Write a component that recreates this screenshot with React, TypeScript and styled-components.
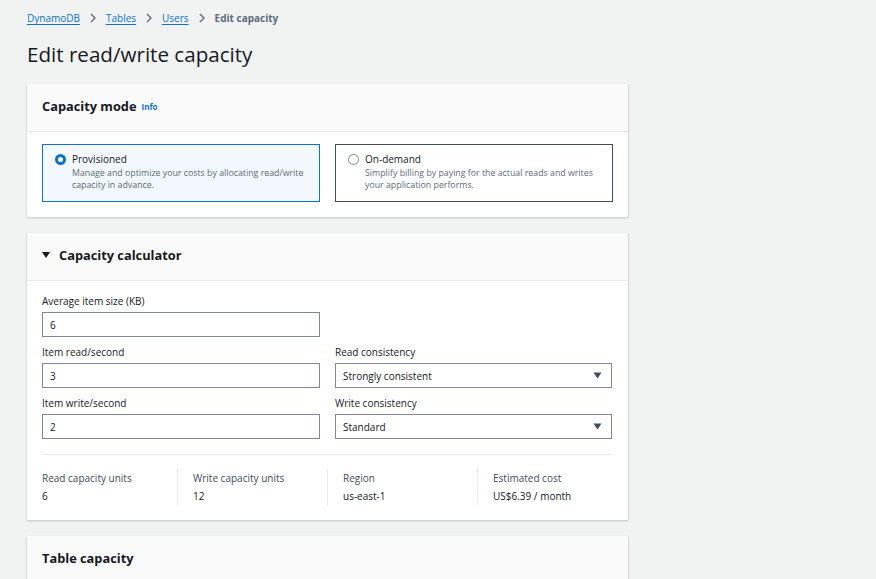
import React from "react";
import styled, { createGlobalStyle } from "styled-components";

const Global = createGlobalStyle`
  html, body { margin: 0; padding: 0; background: #f1f2f2; }
  body { font-family: "Open Sans", "Liberation Sans", sans-serif; color: #16191f; }
  * { box-sizing: border-box; }
`;

const Page = styled.div`
  padding: 9px 0 0 27px;
  width: 628px;
`;

const Crumbs = styled.nav`
  display: flex;
  align-items: center;
  gap: 9px;
  font-size: 10px;
  height: 18px;
`;

const CrumbLink = styled.a`
  color: #0972d3;
  text-decoration: underline;
  text-underline-offset: 2px;
`;

const CrumbCurrent = styled.span`
  color: #5f6b7a;
  font-weight: 700;
`;

const Chevron = () => (
  <svg width="8" height="10" viewBox="0 0 8 10">
    <path d="M2 1l4 4-4 4" fill="none" stroke="#5f6b7a" strokeWidth="1.4" />
  </svg>
);

const Title = styled.h1`
  margin: 14px 0 17px;
  font-size: 20.6px;
  font-weight: 400;
  line-height: 26px;
`;

const Card = styled.section`
  background: #fff;
  box-shadow: 0 1px 2px rgba(0, 7, 22, 0.18), 1px 0 0 rgba(0,0,0,0.06), -1px 0 0 rgba(0,0,0,0.03);
  margin-bottom: 16px;
`;

const CardHeader = styled.header<{ $bordered?: boolean }>`
  background: #fafafa;
  height: 48px;
  padding: 0 15px 4px;
  display: flex;
  align-items: center;
  gap: 8px;
  border-bottom: ${(p) => (p.$bordered ? "1px solid #e9ebed" : "none")};
`;

const CardTitle = styled.h2`
  margin: 0;
  font-size: 12.8px;
  font-weight: 700;
  display: flex;
  align-items: center;
  gap: 5px;
`;

const Info = styled.a`
  color: #0972d3;
  font-size: 8px;
  font-weight: 700;
  margin-top: 2px;
`;

const CardBody = styled.div<{ $top?: number; $bottom?: number }>`
  padding: ${(p) => p.$top ?? 12}px 15px ${(p) => p.$bottom ?? 15}px;
`;

const TileRow = styled.div`
  display: grid;
  grid-template-columns: 1fr 1fr;
  gap: 15px;
`;

const Tile = styled.label<{ $selected?: boolean }>`
  border: 1px solid ${(p) => (p.$selected ? "#0972d3" : "#414d5c")};
  background: ${(p) => (p.$selected ? "#f2f8fd" : "#fff")};
  height: 58px;
  padding: 7px 12px;
  display: flex;
  gap: 6px;
`;

const Radio = styled.span<{ $checked?: boolean }>`
  flex: none;
  width: 11px;
  height: 11px;
  margin-top: 2px;
  border-radius: 50%;
  border: ${(p) => (p.$checked ? "3px solid #0972d3" : "1px solid #7d8998")};
  background: #fff;
`;

const TileText = styled.div`
  display: flex;
  flex-direction: column;
`;

const TileTitle = styled.span`
  font-size: 10px;
  line-height: 15px;
`;

const TileDesc = styled.span`
  font-size: 8.8px;
  line-height: 12px;
  color: #5f6b7a;
`;

const Caret = styled.span`
  display: inline-block;
  width: 0;
  height: 0;
  border-left: 4px solid transparent;
  border-right: 4px solid transparent;
  border-top: 6px solid #16191f;
  margin-right: 4px;
`;

const FormGrid = styled.div`
  display: grid;
  grid-template-columns: 278px 277px;
  column-gap: 15px;
  row-gap: 8px;
`;

const Field = styled.div`
  display: flex;
  flex-direction: column;
  gap: 3px;
`;

const Label = styled.span`
  font-size: 10px;
  line-height: 15px;
`;

const Input = styled.div`
  height: 25px;
  border: 1px solid #7d8998;
  padding: 0 7px;
  display: flex;
  align-items: center;
  font-size: 10px;
`;

const SelectBox = styled(Input)`
  justify-content: space-between;
  padding-right: 9px;
`;

const SelectArrow = () => (
  <svg width="9" height="7" viewBox="0 0 9 7">
    <path d="M0.5 0.5h8L4.5 6.5z" fill="#414d5c" />
  </svg>
);

const Divider = styled.hr`
  border: none;
  border-top: 1px solid #e9ebed;
  margin: 15px 0 14px;
`;

const Stats = styled.div`
  display: grid;
  grid-template-columns: 135px 150px 150px 135px;
`;

const Stat = styled.div<{ $first?: boolean }>`
  display: flex;
  flex-direction: column;
  gap: 4px;
  padding-left: ${(p) => (p.$first ? "0" : "15px")};
  border-left: ${(p) => (p.$first ? "none" : "1px solid #e9ebed")};
  padding-top: 2px;
  padding-bottom: 1px;
`;

const StatLabel = styled.span`
  font-size: 10px;
  line-height: 14px;
  color: #414d5c;
`;

const StatValue = styled.span`
  font-size: 10px;
  line-height: 15px;
`;

export default function App() {
  return (
    <>
      <Global />
      <Page>
        <Crumbs>
          <CrumbLink>DynamoDB</CrumbLink>
          <Chevron />
          <CrumbLink>Tables</CrumbLink>
          <Chevron />
          <CrumbLink>Users</CrumbLink>
          <Chevron />
          <CrumbCurrent>Edit capacity</CrumbCurrent>
        </Crumbs>
        <Title>Edit read/write capacity</Title>

        <Card>
          <CardHeader $bordered>
            <CardTitle>
              Capacity mode <Info>Info</Info>
            </CardTitle>
          </CardHeader>
          <CardBody>
            <TileRow>
              <Tile $selected>
                <Radio $checked />
                <TileText>
                  <TileTitle>Provisioned</TileTitle>
                  <TileDesc>
                    Manage and optimize your costs by allocating read/write capacity in advance.
                  </TileDesc>
                </TileText>
              </Tile>
              <Tile>
                <Radio />
                <TileText>
                  <TileTitle>On-demand</TileTitle>
                  <TileDesc>
                    Simplify billing by paying for the actual reads and writes your application performs.
                  </TileDesc>
                </TileText>
              </Tile>
            </TileRow>
          </CardBody>
        </Card>

        <Card>
          <CardHeader $bordered>
            <CardTitle>
              <Caret />Capacity calculator
            </CardTitle>
          </CardHeader>
          <CardBody $top={13} $bottom={15}>
            <FormGrid>
              <Field>
                <Label>Average item size (KB)</Label>
                <Input>6</Input>
              </Field>
              <div />
              <Field>
                <Label>Item read/second</Label>
                <Input>3</Input>
              </Field>
              <Field>
                <Label>Read consistency</Label>
                <SelectBox>
                  Strongly consistent <SelectArrow />
                </SelectBox>
              </Field>
              <Field>
                <Label>Item write/second</Label>
                <Input>2</Input>
              </Field>
              <Field>
                <Label>Write consistency</Label>
                <SelectBox>
                  Standard <SelectArrow />
                </SelectBox>
              </Field>
            </FormGrid>
            <Divider />
            <Stats>
              <Stat $first>
                <StatLabel>Read capacity units</StatLabel>
                <StatValue>6</StatValue>
              </Stat>
              <Stat>
                <StatLabel>Write capacity units</StatLabel>
                <StatValue>12</StatValue>
              </Stat>
              <Stat>
                <StatLabel>Region</StatLabel>
                <StatValue>us-east-1</StatValue>
              </Stat>
              <Stat>
                <StatLabel>Estimated cost</StatLabel>
                <StatValue>US$6.39 / month</StatValue>
              </Stat>
            </Stats>
          </CardBody>
        </Card>

        <Card>
          <CardHeader>
            <CardTitle>Table capacity</CardTitle>
          </CardHeader>
        </Card>
      </Page>
    </>
  );
}
